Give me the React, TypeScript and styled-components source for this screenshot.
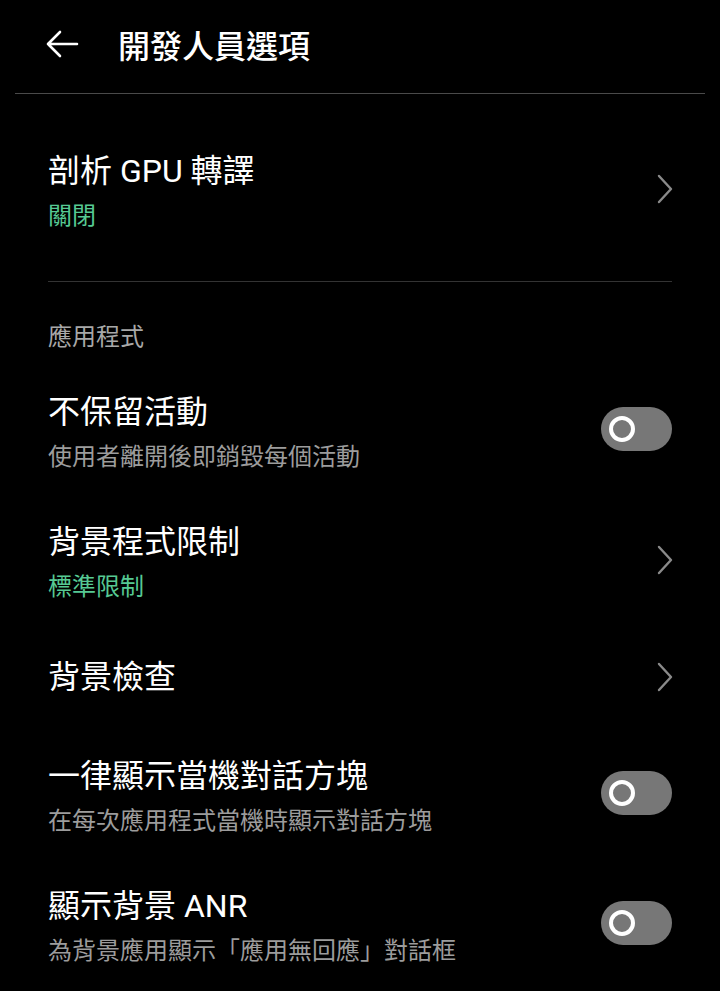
import styled, { createGlobalStyle } from 'styled-components';

const GlobalStyle = createGlobalStyle`
  html, body {
    margin: 0;
    padding: 0;
    background: #000;
  }
  body {
    font-family: Roboto, 'Noto Sans CJK TC', sans-serif;
    color: #fff;
  }
`;

type Setting = {
  title: string;
  sub?: string;
  subGreen?: boolean;
  control: 'chevron' | 'toggle';
};

const appSettings: Setting[] = [
  { title: '不保留活動', sub: '使用者離開後即銷毀每個活動', control: 'toggle' },
  { title: '背景程式限制', sub: '標準限制', subGreen: true, control: 'chevron' },
  { title: '背景檢查', control: 'chevron' },
  { title: '一律顯示當機對話方塊', sub: '在每次應用程式當機時顯示對話方塊', control: 'toggle' },
  { title: '顯示背景 ANR', sub: '為背景應用顯示「應用無回應」對話框', control: 'toggle' },
];

const Chevron = () => (
  <svg width="18" height="30" viewBox="0 0 18 30">
    <path d="M3 2 L15 15 L3 28" fill="none" stroke="#8a8a8a" strokeWidth="2.4" strokeLinecap="round" strokeLinejoin="round" />
  </svg>
);

const BackArrow = () => (
  <svg width="34" height="28" viewBox="0 0 34 28">
    <path d="M3 14 H32 M15 2 L3 14 L15 26" fill="none" stroke="#fff" strokeWidth="2.6" strokeLinecap="round" strokeLinejoin="round" />
  </svg>
);

/** 設定列 */
const SettingRow = ({ item }: { item: Setting }) => {
  const single = !item.sub;
  return (
    <RowS $single={single}>
      <RowTextS>
        <TitleS>{item.title}</TitleS>
        {item.sub && <SubS $green={item.subGreen}>{item.sub}</SubS>}
      </RowTextS>
      {item.control === 'chevron' ? (
        <ChevronBoxS $single={single}>
          <Chevron />
        </ChevronBoxS>
      ) : (
        <ToggleS>
          <KnobS />
        </ToggleS>
      )}
    </RowS>
  );
};

const App = () => {
  return (
    <PageS>
      <GlobalStyle />
      <HeaderS>
        <BackS>
          <BackArrow />
        </BackS>
        <HeaderTitleS>開發人員選項</HeaderTitleS>
      </HeaderS>
      <ListS>
        <SettingRow item={{ title: '剖析 GPU 轉譯', sub: '關閉', subGreen: true, control: 'chevron' }} />
        <DividerS />
        <SectionLabelS>應用程式</SectionLabelS>
        {appSettings.map((item) => (
          <SettingRow item={item} key={item.title} />
        ))}
      </ListS>
    </PageS>
  );
};

export default App;

const PageS = styled.div`
  width: 720px;
  height: 991px;
  overflow: hidden;
  background: #000;
`;

const HeaderS = styled.header`
  display: flex;
  align-items: center;
  box-sizing: border-box;
  height: 94px;
  margin: 0 15px;
  padding-bottom: 6px;
  border-bottom: 1px solid #4a4a4a;
`;

const BackS = styled.div`
  display: flex;
  align-items: center;
  margin-left: 30px;
  width: 73px;
`;

const HeaderTitleS = styled.h1`
  margin: 0;
  font-size: 32px;
  font-weight: 500;
`;

const ListS = styled.div`
  padding: 33px 48px 0 48px;
`;

const RowS = styled.div<{ $single: boolean }>`
  display: flex;
  align-items: center;
  justify-content: space-between;
  box-sizing: border-box;
  height: ${(p) => (p.$single ? '104px' : '130px')};
  padding-bottom: ${(p) => (p.$single ? '6px' : '0')};
`;

const RowTextS = styled.div`
  display: flex;
  flex-direction: column;
`;

const TitleS = styled.div`
  font-size: 32px;
  line-height: 48px;
  color: #fff;
`;

const SubS = styled.div<{ $green?: boolean }>`
  font-size: 24px;
  line-height: 42px;
  color: ${(p) => (p.$green ? '#56c993' : '#9c9c9c')};
`;

const ChevronBoxS = styled.div<{ $single: boolean }>`
  display: flex;
  margin-right: -2px;
  margin-bottom: ${(p) => (p.$single ? '0' : '7px')};
`;

const ToggleS = styled.div`
  position: relative;
  width: 71px;
  height: 44px;
  border-radius: 22px;
  background: #777;
  flex-shrink: 0;
  margin-bottom: 8px;
`;

const KnobS = styled.div`
  position: absolute;
  left: 8px;
  top: 9px;
  width: 18px;
  height: 18px;
  border-radius: 50%;
  border: 4px solid #fff;
  background: #777;
`;

const DividerS = styled.div`
  height: 1px;
  background: #333;
  margin-top: 24px;
`;

const SectionLabelS = styled.div`
  font-size: 24px;
  line-height: 34px;
  color: #a8a8a8;
  margin: 38px 0 14px;
`;
